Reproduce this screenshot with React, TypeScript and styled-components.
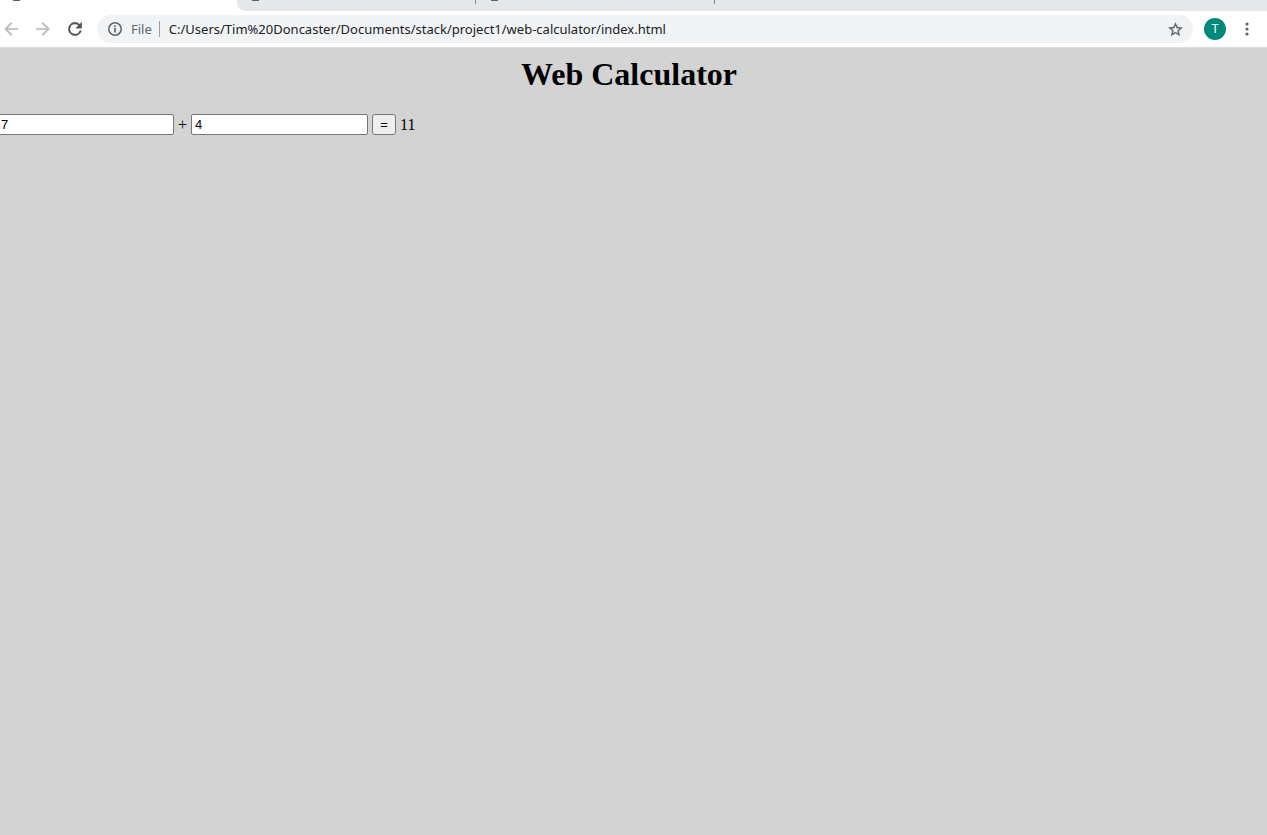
import React, { useState } from "react";
import styled, { createGlobalStyle } from "styled-components";

const GlobalStyle = createGlobalStyle`
  html, body, #root { height: 100%; }
  body {
    margin: 0;
    background: #d3d3d3;
    color: #000;
    font-family: "Liberation Serif", serif;
  }
  *, *::before, *::after { box-sizing: border-box; }
`;

const Window = styled.div`
  display: flex;
  flex-direction: column;
  min-height: 100%;
  overflow: hidden;
`;

const TabStrip = styled.div`
  display: flex;
  height: 11px;
  background: #fff;
`;

const ActiveTab = styled.div`
  flex: none;
  width: 237px;
  padding-left: 13px;
`;

const OtherTabs = styled.div`
  display: flex;
  flex: 1;
  background: #e5e8eb;
  border-bottom-left-radius: 8px;
`;

const Tab = styled.div`
  width: 239px;
  padding-left: 15px;
  background: linear-gradient(#85888c, #85888c) right top / 1px 4px no-repeat;
`;

const Favicon = styled.span`
  display: block;
  width: 7px;
  height: 1px;
  background: #5f6368;
`;

const Toolbar = styled.header`
  display: flex;
  align-items: center;
  height: 37px;
  padding: 0 4px 0 0;
  background: #fff;
  border-bottom: 1px solid #dadcde;
`;

const NavButton = styled.button<{ $color: string }>`
  display: flex;
  align-items: center;
  justify-content: center;
  flex: none;
  width: 32px;
  height: 32px;
  padding: 0;
  border: 0;
  background: none;
  color: ${(p) => p.$color};
`;

const NavGroup = styled.nav`
  display: flex;
  flex: none;
  margin: 0 6px 0 -5px;
`;

const AddressBar = styled.div`
  display: flex;
  align-items: center;
  flex: 1;
  height: 28px;
  padding: 0 2px 0 11px;
  border-radius: 14px;
  background: #f1f3f4;
  font: 13px/20px "Noto Sans", "Open Sans", sans-serif;
`;

const Scheme = styled.span`
  margin-left: 9px;
  padding-right: 7px;
  color: #5f6368;
`;

const Divider = styled.span`
  width: 1px;
  height: 16px;
  margin-right: 9px;
  background: #9a9da1;
`;

const Address = styled.input`
  flex: 1;
  min-width: 0;
  padding: 0;
  border: 0;
  outline: 0;
  background: none;
  color: #202124;
  font: inherit;
`;

const Avatar = styled.button`
  flex: none;
  width: 22px;
  height: 22px;
  margin: 0 5px 0 11px;
  padding: 0;
  border: 0;
  border-radius: 50%;
  background: #00897b;
  color: #fff;
  font: 12px/22px Roboto, sans-serif;
`;

const Page = styled.main`
  flex: 1;
  padding: 8px 9px 8px 0;
`;

const Title = styled.h1`
  margin: 0 0 22px;
  font-size: 32px;
  line-height: 36px;
  text-align: center;
`;

const Calculator = styled.form`
  display: flex;
  align-items: center;
  gap: 4px;
  margin-left: -3px;
  font-size: 16px;
  line-height: 18px;
`;

const NumberField = styled.input`
  width: 177px;
  height: 21px;
  padding: 1px 3px;
  border: 1px solid #767676;
  border-radius: 2px;
  outline: 0;
  background: #fff;
  color: #000;
  font: 13px/16px "Liberation Sans", Arial, sans-serif;
`;

const EqualsButton = styled.button`
  width: 24px;
  height: 21px;
  padding: 0;
  border: 1px solid #767676;
  border-radius: 3px;
  background: #efefef;
  color: #000;
  font: 13px/16px "Liberation Sans", Arial, sans-serif;
`;

const arrow = "M20 11H7.83l5.59-5.59L12 4l-8 8 8 8 1.41-1.41L7.83 13H20z";

function ArrowIcon({ forward }: { forward?: boolean }) {
  return (
    <svg width="20" height="20" viewBox="0 0 24 24" fill="currentColor" aria-hidden="true">
      <path
        d={arrow}
        stroke="currentColor"
        strokeWidth="0.4"
        transform={forward ? "rotate(180 12 12)" : undefined}
      />
    </svg>
  );
}

function ReloadIcon() {
  return (
    <svg width="20" height="20" viewBox="0 0 24 24" fill="currentColor" aria-hidden="true">
      <path d="M17.65 6.35A8 8 0 1 0 19.73 14h-2.08A6 6 0 1 1 12 6c1.66 0 3.14.69 4.22 1.78L13 11h7V4z" stroke="currentColor" strokeWidth="0.5" />
    </svg>
  );
}

function InfoIcon() {
  return (
    <svg width="14" height="14" viewBox="0 0 14 14" fill="none" stroke="#5f6368" aria-hidden="true">
      <circle cx="7" cy="7" r="6.2" strokeWidth="1.5" />
      <path d="M7 6v4.5M7 3.3v1.6" strokeWidth="1.7" />
    </svg>
  );
}

function StarIcon() {
  return (
    <svg width="17" height="17" viewBox="0 0 24 24" fill="currentColor" aria-hidden="true">
      <path
        d="M22 9.24l-7.19-.62L12 2 9.19 8.63 2 9.24l5.46 4.73L5.82 21 12 17.27 18.18 21l-1.63-7.03L22 9.24zM12 15.4l-3.76 2.27 1-4.28-3.32-2.88 4.38-.38L12 6.1l1.71 4.04 4.38.38-3.32 2.88 1 4.28L12 15.4z"
        stroke="currentColor"
        strokeWidth="0.4"
      />
    </svg>
  );
}

function MenuIcon() {
  return (
    <svg width="4" height="14" viewBox="0 0 4 14" fill="currentColor" aria-hidden="true">
      <circle cx="2" cy="2" r="1.6" />
      <circle cx="2" cy="7" r="1.6" />
      <circle cx="2" cy="12" r="1.6" />
    </svg>
  );
}

export default function App() {
  const [first, setFirst] = useState("7");
  const [second, setSecond] = useState("4");
  const [result, setResult] = useState(11);

  const calculate = (event: React.FormEvent) => {
    event.preventDefault();
    setResult(Number(first) + Number(second));
  };

  return (
    <Window>
      <GlobalStyle />
      <TabStrip>
        <ActiveTab>
          <Favicon />
        </ActiveTab>
        <OtherTabs>
          <Tab>
            <Favicon />
          </Tab>
          <Tab>
            <Favicon />
          </Tab>
        </OtherTabs>
      </TabStrip>
      <Toolbar>
        <NavGroup>
          <NavButton type="button" aria-label="Back" $color="#babcbe">
            <ArrowIcon />
          </NavButton>
          <NavButton type="button" aria-label="Forward" $color="#babcbe">
            <ArrowIcon forward />
          </NavButton>
          <NavButton type="button" aria-label="Reload" $color="#505357">
            <ReloadIcon />
          </NavButton>
        </NavGroup>
        <AddressBar>
          <InfoIcon />
          <Scheme>File</Scheme>
          <Divider />
          <Address
            aria-label="Address"
            defaultValue="C:/Users/Tim%20Doncaster/Documents/stack/project1/web-calculator/index.html"
          />
          <NavButton type="button" aria-label="Bookmark this page" $color="#5f6368">
            <StarIcon />
          </NavButton>
        </AddressBar>
        <Avatar type="button" aria-label="Profile T">T</Avatar>
        <NavButton type="button" aria-label="Menu" $color="#5f6368">
          <MenuIcon />
        </NavButton>
      </Toolbar>
      <Page>
        <Title>Web Calculator</Title>
        <Calculator onSubmit={calculate}>
          <NumberField aria-label="First number" value={first} onChange={(e) => setFirst(e.target.value)} />
          <span>+</span>
          <NumberField aria-label="Second number" value={second} onChange={(e) => setSecond(e.target.value)} />
          <EqualsButton type="submit">=</EqualsButton>
          <output>{result}</output>
        </Calculator>
      </Page>
    </Window>
  );
}
